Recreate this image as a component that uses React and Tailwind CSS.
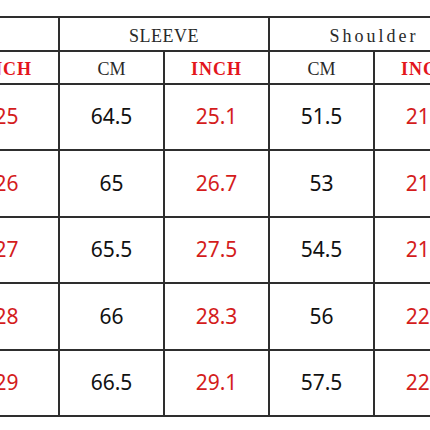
import React from "react";

const rows = [
  ["25", "64.5", "25.1", "51.5", "21.3"],
  ["26", "65", "26.7", "53", "21.5"],
  ["27", "65.5", "27.5", "54.5", "21.9"],
  ["28", "66", "28.3", "56", "22.0"],
  ["29", "66.5", "29.1", "57.5", "22.6"],
];

const line = "border-2 border-[#2e2e2e]";
const serif = { fontFamily: '"Liberation Serif", "DejaVu Serif", serif' };
const sans = { fontFamily: '"Noto Sans", "Open Sans", sans-serif' };

function Unit({ red, children }) {
  return (
    <td
      className={`${line} text-center pt-1 text-[18px] ${
        red ? "text-[#e3161c] font-bold tracking-[1px]" : "text-[#2a2a2a]"
      }`}
      style={serif}
    >
      {children}
    </td>
  );
}

export default function App() {
  return (
    <div className="w-[430px] h-[430px] bg-white overflow-hidden pt-4">
      <table className="border-collapse table-fixed w-[525px] -ml-[47px]">
        <colgroup>
          <col className="w-[105px]" />
          <col className="w-[105px]" />
          <col className="w-[105px]" />
          <col className="w-[105px]" />
          <col className="w-[105px]" />
        </colgroup>
        <tbody>
          <tr className="h-[34px]">
            <td className={`${line} border-l-0`}></td>
            <td
              colSpan={2}
              className={`${line} text-center pt-1 text-[18px] text-[#2a2a2a] tracking-[0.5px]`}
              style={serif}
            >
              SLEEVE
            </td>
            <td
              colSpan={2}
              className={`${line} text-center pt-1 text-[18px] text-[#2a2a2a] tracking-[3px]`}
              style={serif}
            >
              Shoulder
            </td>
          </tr>
          <tr className="h-[32px]">
            <Unit red>INCH</Unit>
            <Unit>CM</Unit>
            <Unit red>INCH</Unit>
            <Unit>CM</Unit>
            <Unit red>INCH</Unit>
          </tr>
          {rows.map((r, i) => (
            <tr key={i} className="h-[66.4px]">
              {r.map((v, j) => (
                <td
                  key={j}
                  className={`${line} text-center text-[21px] ${
                    j % 2 === 0 ? "text-[#d41c1c]" : "text-[#111]"
                  }`}
                  style={sans}
                >
                  {v}
                </td>
              ))}
            </tr>
          ))}
        </tbody>
      </table>
    </div>
  );
}
